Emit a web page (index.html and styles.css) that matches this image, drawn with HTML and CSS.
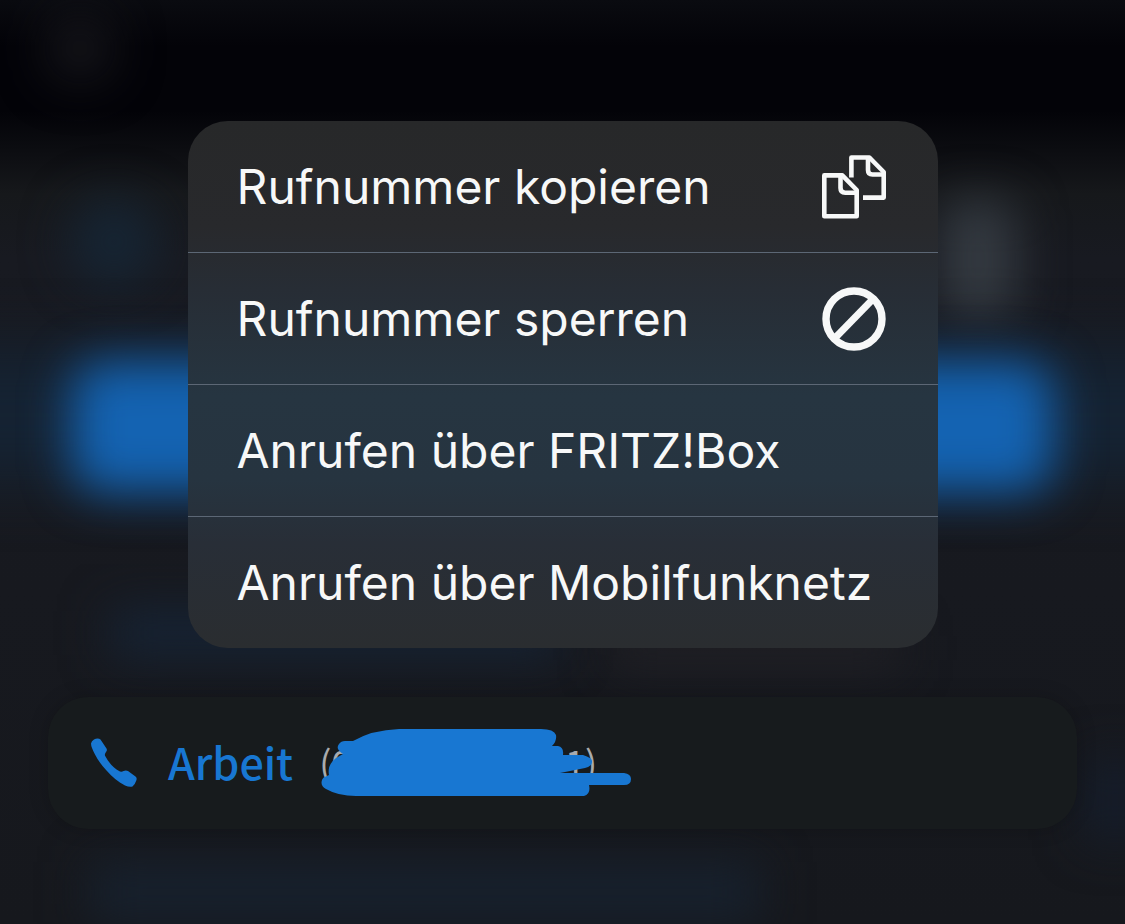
FILE: index.html
```html
<!DOCTYPE html>
<html lang="de">
<head>
  <meta charset="UTF-8" />
  <meta name="viewport" content="width=device-width, initial-scale=1.0"/>
  <title>Rufnummer</title>
  <link rel="stylesheet" href="styles.css">
</head>
<body>

<!-- blurred contact page behind the menu -->
<svg class="backdrop" viewBox="0 0 1125 924" preserveAspectRatio="none" aria-hidden="true">
  <defs>
    <filter id="blur" x="-100%" y="-100%" width="300%" height="300%" color-interpolation-filters="sRGB"><feGaussianBlur stdDeviation="24"/></filter>
    <filter id="soft" x="-100%" y="-100%" width="300%" height="300%" color-interpolation-filters="sRGB"><feGaussianBlur stdDeviation="30"/></filter>
    <linearGradient id="page" x1="0" y1="0" x2="0" y2="1">
      <stop offset="0" stop-color="#0a0b10"/>
      <stop offset="0.05" stop-color="#030308"/>
      <stop offset="0.12" stop-color="#030308"/>
      <stop offset="0.21" stop-color="#16181b"/>
      <stop offset="0.28" stop-color="#181a21"/>
      <stop offset="1" stop-color="#16181d"/>
    </linearGradient>
  </defs>
  <rect width="1125" height="924" fill="url(#page)"/>
  <circle cx="80" cy="48" r="34" fill="#15151a" filter="url(#blur)"/>
  <circle cx="114" cy="242" r="44" fill="#162534" filter="url(#blur)"/>
  <rect x="940" y="200" width="76" height="120" rx="20" fill="#343a41" filter="url(#blur)"/>
  <rect x="-80" y="350" width="1285" height="130" fill="#152333" filter="url(#soft)"/>
  <rect x="72" y="362" width="981" height="130" rx="30" fill="#1463b2" filter="url(#blur)"/>
  <rect x="110" y="610" width="450" height="46" fill="#162436" filter="url(#blur)"/>
  <rect x="610" y="630" width="290" height="36" fill="#222126" filter="url(#blur)"/>
  <rect x="90" y="862" width="670" height="60" fill="#17212e" filter="url(#blur)"/>
  <rect x="1085" y="760" width="60" height="80" fill="#151d2b" filter="url(#blur)"/>
</svg>

<main class="container">
  <div class="menu">
    <button class="menu-item" type="button">
      <span>Rufnummer kopieren</span>
      <svg class="menu-icon" viewBox="0 0 64 64" aria-hidden="true">
        <g fill="none" stroke="#f7f8f8" stroke-width="4.6" stroke-linejoin="round">
          <path d="M29.4 22.5V2.5h18L61.7 17v25.6H41"/>
          <path d="M46 2.5V15q0 4.5 4.5 4.5h11"/>
          <path d="M2.3 20.4h18L34.7 35v26.3H2.3z"/>
          <path d="M18.5 20.4V33q0 4.7 4.7 4.7h11.5"/>
        </g>
      </svg>
    </button>
    <button class="menu-item" type="button">
      <span>Rufnummer sperren</span>
      <svg class="menu-icon" viewBox="0 0 64 64" aria-hidden="true">
        <g fill="none" stroke="#f7f8f8" stroke-width="7.4">
          <circle cx="32" cy="32" r="28"/>
          <path d="M13 51L51 12" stroke-width="7"/>
        </g>
      </svg>
    </button>
    <button class="menu-item" type="button"><span>Anrufen über FRITZ!Box</span></button>
    <button class="menu-item" type="button"><span>Anrufen über Mobilfunknetz</span></button>
  </div>

  <div class="phone-card">
    <svg class="phone-icon" viewBox="0 0 46 50" aria-hidden="true">
      <path fill="#1877d2" d="M3 1.5C5 .2 8 0 9.5 1.5L15.5 10.5Q16.500 12.500 15 14Q13 16.500 14.500 18.500C18 25 23 30.500 29 33.500Q31 34 32.500 33Q35 31.800 37 33L44.500 38.500Q46.300 40 45.300 42.500Q44 46.500 41.500 48.500Q38.500 49.500 34 47.500C27 44 21 38.500 15.500 32.500Q8 24.500 4 16.500Q0 9 0 5.500Q.5 3 3 1.500Z"/>
    </svg>
    <span class="phone-label">Arbeit</span>
    <span class="phone-number">
      <span>(0</span>
      <span>1)</span>
      <svg class="scribble" viewBox="0 0 310 68" aria-hidden="true">
        <path fill="#1877d2" d="M6 47L8 46Q6 36 15 29L22 25Q14 20 18 15Q20 12 24 12H32Q51 1 78 0H220Q233 0 235 6Q236 12 231 17H237Q243 18 242 26H262Q272 29 271 33Q271 37 264 39L239 44H303Q310 45 310 50Q310 56 303 56H268Q270 65 263 67H35Q17 67 5 60Q-1 57 1 51Q2 48 6 47Z"/>
      </svg>
    </span>
  </div>
</main>

</body>
</html>
```
FILE: styles.css
```css
* {
  box-sizing: border-box;
}

body {
  margin: 0;
  min-height: 100vh;
  position: relative;
  overflow: hidden;
  background: #17181d;
  font-family: Inter, "Noto Sans", sans-serif;
}

.backdrop {
  position: absolute;
  top: 0;
  left: 0;
  width: 100%;
  height: 100%;
}

.container {
  position: relative;
  display: flex;
  flex-direction: column;
  gap: 49px;
  padding: 121px 48px 48px;
}

.menu {
  width: 100%;
  max-width: 750px;
  margin: 0 auto;
  border-radius: 40px;
  overflow: hidden;
  background: linear-gradient(#272829 0%, #28292c 20%, #272d35 32%, #263541 52%, #263440 68%, #282e37 80%, #2a2d30 100%);
}

.menu-item {
  display: flex;
  align-items: center;
  justify-content: space-between;
  width: 100%;
  height: 132px;
  padding: 0 52px 0 49px;
  border: none;
  border-bottom: 1px solid #5c6775;
  background: none;
  color: #f7f8f8;
  font-family: inherit;
  font-size: 48px;
  text-align: left;
  cursor: pointer;
}

.menu-item:last-child {
  height: 131px;
  border-bottom: none;
}

.menu-icon {
  width: 64px;
  height: 64px;
  flex-shrink: 0;
}

.phone-card {
  display: flex;
  align-items: center;
  height: 132px;
  padding: 0 43px;
  border-radius: 40px;
  background: #171b1d;
  box-shadow: 0 0 20px rgba(0, 0, 0, 0.2);
  font-family: "Noto Sans CJK SC", "Noto Sans", sans-serif;
}

.phone-icon {
  width: 46px;
  height: 50px;
  margin-right: 31px;
}

.phone-label {
  padding-bottom: 5px;
  color: #1877d2;
  font-size: 43px;
  font-weight: 500;
}

.phone-number {
  position: relative;
  display: flex;
  justify-content: space-between;
  width: 278px;
  margin-left: 26px;
  padding-bottom: 5px;
  color: #a9abad;
  font-size: 36px;
  font-weight: 400;
}

/* marker strokes over the number */
.scribble {
  position: absolute;
  top: -6px;
  left: 2px;
  width: 310px;
  height: 68px;
}
```
